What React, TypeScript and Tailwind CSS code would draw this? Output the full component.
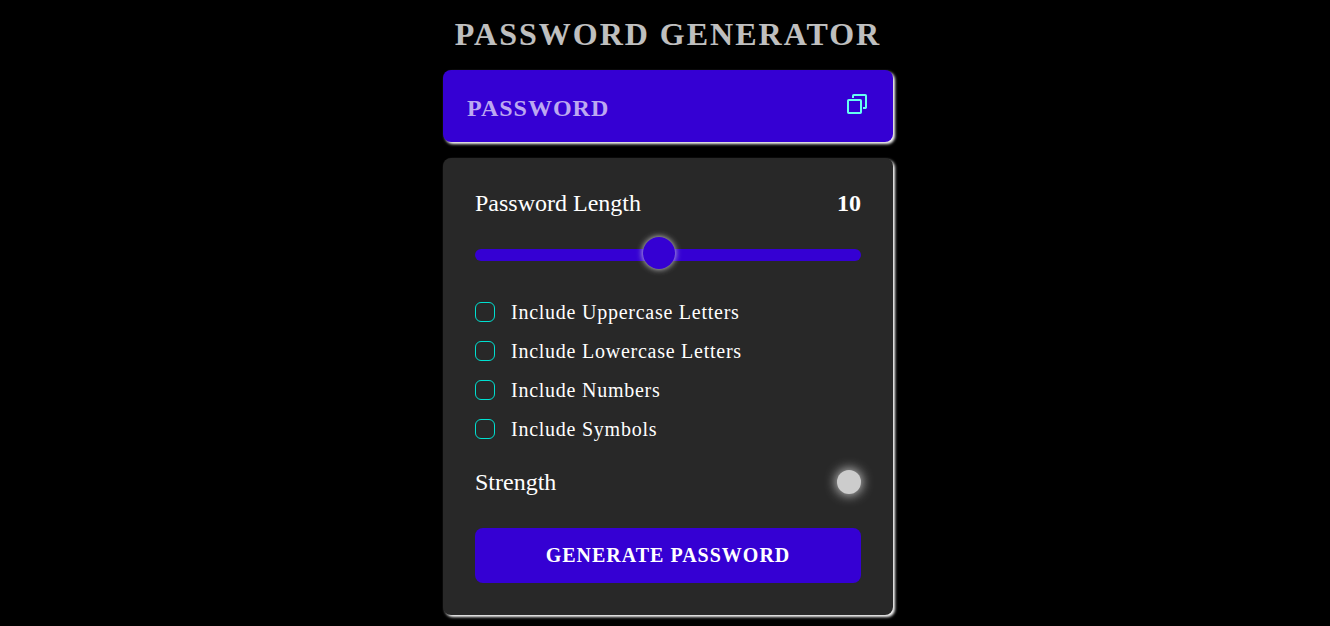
import { useState } from "react";

const options = [
  "Include Uppercase Letters",
  "Include Lowercase Letters",
  "Include Numbers",
  "Include Symbols",
];

const MIN = 1;
const MAX = 20;

function CopyIcon() {
  return (
    <svg width="20" height="20" viewBox="0 0 20 20" fill="none" stroke="#66fff0" strokeWidth="2" strokeLinejoin="round">
      <rect x="1" y="6" width="13" height="13" rx="0.75" />
      <path d="M6 4V1.750a.75.75 0 0 1 .75-.75H18.250a.75.75 0 0 1 .75.75V13.250a.75.75 0 0 1-.75.75H16" />
    </svg>
  );
}

function LengthSlider({ value }: { value: number }) {
  const ratio = (value - MIN) / (MAX - MIN);
  return (
    <div
      role="slider"
      aria-valuemin={MIN}
      aria-valuemax={MAX}
      aria-valuenow={value}
      className="relative mt-[30px] h-3 rounded-full bg-[#3500d3]"
    >
      <div
        className="absolute -top-3 size-8 -translate-y-px rounded-full bg-[#3500d3] shadow-[0_0_6px_#dddddd]"
        style={{ left: Math.round(ratio * 354), marginTop: 0.5 }}
      />
    </div>
  );
}

export default function App() {
  const [length] = useState(10);
  const [checked, setChecked] = useState<string[]>([]);
  const toggle = (name: string) =>
    setChecked((c) => (c.includes(name) ? c.filter((n) => n !== name) : [...c, name]));

  return (
    <main className="flex h-[626px] justify-center overflow-hidden bg-black pl-1.5 font-['Liberation_Serif','Times_New_Roman',serif] text-white">
      <div className="flex w-[450px] flex-col">
        <h1 className="mt-4 text-center text-[32px] leading-[37px] font-bold tracking-[2px] whitespace-nowrap uppercase opacity-75">
          Password Generator
        </h1>
        <div className="mt-[17px] flex h-[72px] items-center justify-between rounded-lg bg-[#3500d3] pr-[26px] pl-6 shadow-[2px_2px_3px_#ffffff]">
          <span className="pt-1 text-2xl font-bold tracking-[1px] text-[#bca8f1]">PASSWORD</span>
          <button aria-label="Copy password" className="mb-1">
            <CopyIcon />
          </button>
        </div>
        <section className="mt-4 flex h-[457px] flex-col rounded-lg bg-[#282828] px-8 pt-[29px] shadow-[2px_2px_3px_#ffffff]">
          <div className="flex items-center justify-between text-2xl">
            <p>Password Length</p>
            <p className="font-bold">{length}</p>
          </div>
          <LengthSlider value={length} />
          <div className="mt-[39px] flex flex-col gap-4">
            {options.map((name) => (
              <label key={name} className="flex h-[23px] items-center gap-4 text-xl tracking-[0.75px]">
                <input
                  type="checkbox"
                  checked={checked.includes(name)}
                  onChange={() => toggle(name)}
                  className="size-5 appearance-none rounded-[6px] border border-[#00e0d0] checked:bg-[#00e0d0]"
                />
                <span>{name}</span>
              </label>
            ))}
          </div>
          <div className="mt-[26px] flex items-center justify-between text-2xl">
            <p>Strength</p>
            <div className="size-6 rounded-full bg-[#cccccc] shadow-[0_0_12px_1px_#cccccc]" />
          </div>
          <button className="mt-[30px] h-[55px] w-full rounded-lg bg-[#3500d3] pb-0.5 text-xl font-bold tracking-[1px] uppercase">
            Generate Password
          </button>
        </section>
      </div>
    </main>
  );
}
